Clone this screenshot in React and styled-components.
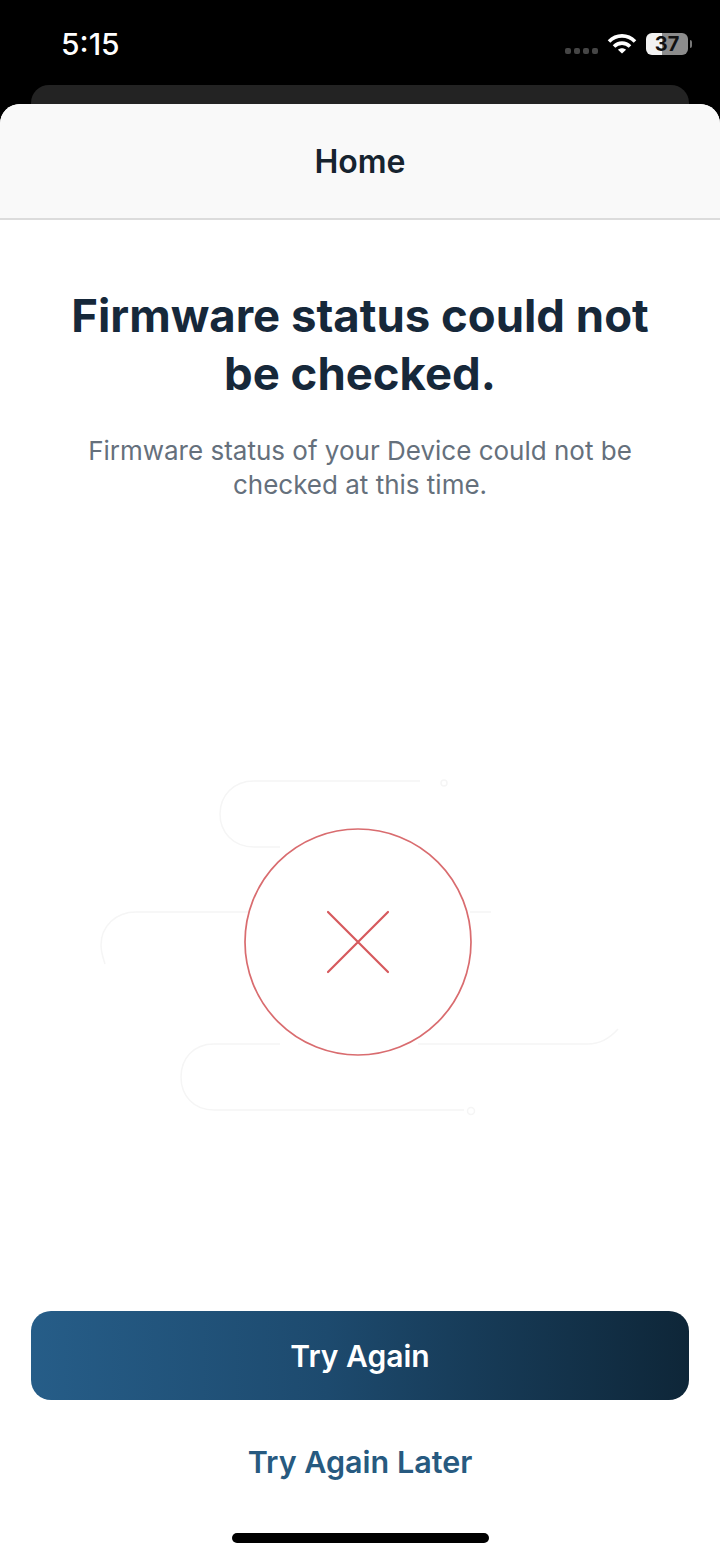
import React from 'react';
import styled, { createGlobalStyle } from 'styled-components';

const GlobalStyle = createGlobalStyle`
  html, body {
    margin: 0;
    padding: 0;
    background: #000;
  }
  * {
    box-sizing: border-box;
  }
`;

const Screen = styled.div`
  width: 720px;
  height: 1558px;
  display: flex;
  flex-direction: column;
  overflow: hidden;
  background: #000;
  font-family: Inter, "Liberation Sans", sans-serif;
`;

const StatusBar = styled.div`
  height: 85px;
  flex: none;
  display: flex;
  align-items: flex-start;
  justify-content: space-between;
  padding: 27px 28px 0 61px;
`;

const Clock = styled.div`
  font-size: 30px;
  line-height: 34px;
  font-weight: 500;
  color: #fff;
`;

const StatusIcons = styled.div`
  display: flex;
  align-items: center;
  gap: 9px;
  height: 34px;
`;

const SignalDots = styled.div`
  display: flex;
  gap: 3px;
  margin-top: 14px;
`;

const Dot = styled.span`
  width: 6px;
  height: 6px;
  border-radius: 2px;
  background: #454545;
`;

const Battery = styled.div`
  position: relative;
  width: 42px;
  height: 22px;
  margin-right: 4px;
  border-radius: 6px;
  background: linear-gradient(90deg, #f2f2f2 0 37%, #8c8c8c 37% 100%);
  font-size: 20px;
  line-height: 22px;
  font-weight: 700;
  text-align: center;
  color: #111;

  &::after {
    content: '';
    position: absolute;
    top: 7px;
    right: -4px;
    width: 2px;
    height: 8px;
    border-radius: 0 2px 2px 0;
    background: #777;
  }
`;

const PeekCard = styled.div`
  height: 19px;
  flex: none;
  margin: 0 31px;
  border-radius: 18px 18px 0 0;
  background: #232323;
`;

const Sheet = styled.div`
  flex: 1;
  display: flex;
  flex-direction: column;
  border-radius: 20px 20px 0 0;
  background: #fff;
  overflow: hidden;
`;

const Header = styled.div`
  height: 116px;
  flex: none;
  display: flex;
  align-items: center;
  justify-content: center;
  padding-top: 1px;
  border-bottom: 2px solid #dcdcdc;
  background: #f9f9f9;
  font-size: 32px;
  font-weight: 600;
  color: #16232f;
`;

const Content = styled.div`
  flex: 1;
  display: flex;
  flex-direction: column;
  align-items: center;
  padding: 67px 30px 0;
`;

const Title = styled.h1`
  margin: 0;
  font-size: 45.5px;
  line-height: 58px;
  font-weight: 700;
  white-space: nowrap;
  text-align: center;
  color: #16283a;
`;

const Description = styled.p`
  width: 620px;
  margin: 31px 0 0;
  font-size: 26px;
  line-height: 34px;
  text-align: center;
  color: #65707c;
`;

const Illustration = styled.svg`
  display: block;
  flex: none;
  margin: 275px 0 0 20px;
`;

const Actions = styled.div`
  margin-top: auto;
  width: 100%;
  display: flex;
  flex-direction: column;
  align-items: center;
`;

const PrimaryButton = styled.button`
  width: 658px;
  height: 89px;
  border: none;
  border-radius: 20px;
  background: linear-gradient(90deg, #265d88 0%, #1d4a6e 45%, #0e2638 100%);
  font-family: inherit;
  font-size: 30px;
  font-weight: 600;
  color: #fff;
`;

const LinkButton = styled.button`
  margin-top: 40px;
  padding: 0;
  border: none;
  background: none;
  font-family: inherit;
  font-size: 30.5px;
  line-height: 44px;
  font-weight: 600;
  color: #275a80;
`;

const HomeIndicator = styled.div`
  width: 257px;
  height: 10px;
  margin: 49px 0 15px;
  border-radius: 5px;
  background: #000;
`;

const App = () => (
  <Screen>
    <GlobalStyle />
    <StatusBar>
      <Clock>5:15</Clock>
      <StatusIcons>
        <SignalDots>
          <Dot />
          <Dot />
          <Dot />
          <Dot />
        </SignalDots>
        <svg width="30" height="22" viewBox="0 0 30 22" fill="none" stroke="#fff" strokeWidth="3.6">
          <path d="M2 8.5C9.5 1 20.5 1 28 8.5" />
          <path d="M7 13.5C11.5 9 18.5 9 23 13.5" />
          <path d="M15 20.5l-4-3.8c2.2-2 5.8-2 8 0z" fill="#fff" stroke="none" />
        </svg>
        <Battery>37</Battery>
      </StatusIcons>
    </StatusBar>
    <PeekCard />
    <Sheet>
      <Header>Home</Header>
      <Content>
        <Title>
          Firmware status could not
          <br />
          be checked.
        </Title>
        <Description>
          Firmware status of your Device could not be checked at this time.
        </Description>
        <Illustration width="540" height="345" viewBox="0 0 540 345" fill="none">
          <g stroke="#f5f5f5" strokeWidth="1.5">
            <path d="M320 4H154C133 4 120 19 120 37S133 70 154 70H180" />
            <path d="M150 135H36C15 135 1 150 1 168c0 7 2 13 4 19" />
            <path d="M370 135H391" />
            <path d="M180 267H114C93 267 81 282 81 300S93 333 114 333H364" />
            <path d="M318 267H488c12 0 22-6 30-15" />
            <circle cx="344" cy="6" r="3" />
            <circle cx="371" cy="334" r="3.5" />
          </g>
          <circle cx="258" cy="165" r="113" stroke="#d96c6f" strokeWidth="1.7" fill="#fff" />
          <path d="M228 135L288 195M288 135L228 195" stroke="#d6595d" strokeWidth="2.2" strokeLinecap="round" />
        </Illustration>
      </Content>
      <Actions>
        <PrimaryButton>Try Again</PrimaryButton>
        <LinkButton>Try Again Later</LinkButton>
        <HomeIndicator />
      </Actions>
    </Sheet>
  </Screen>
);

export default App;
